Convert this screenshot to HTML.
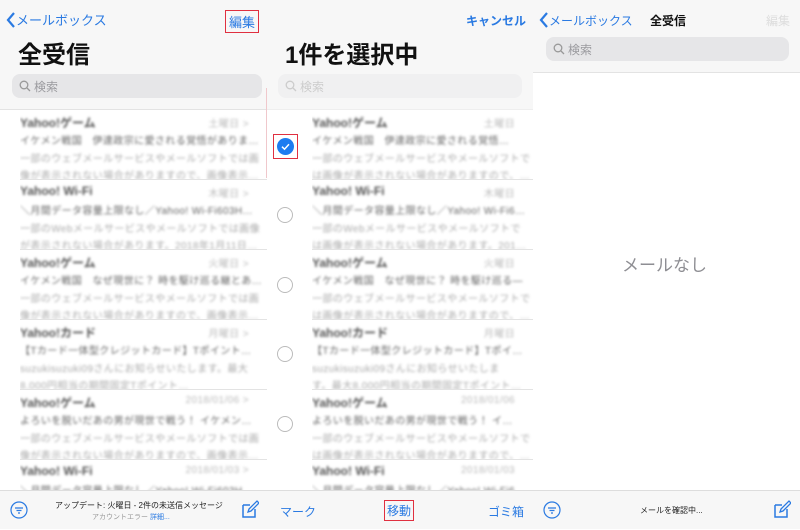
<!DOCTYPE html>
<html><head><meta charset="utf-8"><style>
*{margin:0;padding:0;box-sizing:border-box}
body{width:800px;height:529px;overflow:hidden;background:#fff;font-family:"Liberation Sans","Noto Sans CJK JP",sans-serif;position:relative}
.a{position:absolute;white-space:nowrap}
.hdr{background:#f7f7f7}
.blue{color:#2a7ae2}
.srch{background:#e6e6e8;border-radius:8px;height:24px;font-size:12px;color:#9a9a9e;padding:4px 0 0 22px}
.row{position:absolute;height:70px;border-bottom:1px solid #e3e3e3;overflow:hidden}
.row div{position:absolute;white-space:nowrap;filter:blur(1.2px);font-size:10px;left:0;letter-spacing:0.4px;overflow:hidden;width:100%;padding-right:18px}
.t{top:4px;font-weight:bold;color:#555;font-size:12px!important;letter-spacing:0!important}
.l2{top:22px;color:#666}
.l3{top:40px;color:#aaa}
.l4{top:57px;color:#aaa}
.d{right:18px;left:auto!important;width:auto!important;padding:0!important;top:5px;color:#bbb;font-size:10px!important;text-align:right}
.circ{position:absolute;width:16px;height:16px;border:1px solid #bbb;border-radius:50%}
.bar{position:absolute;top:490px;height:39px;background:#f7f7f7;border-top:1px solid #ddd}
</style></head><body>
<!-- panel 1 -->
<div class="a hdr" style="left:0;top:0;width:267px;height:110px"></div>
<div class="a blue" style="left:6px;top:10px;font-size:13px"><svg width="10" height="16" viewBox="0 0 10 16" style="vertical-align:-3px"><path d="M8 1L2 8l6 7" stroke="#2a7ae2" stroke-width="2.2" fill="none"/></svg>メールボックス</div>
<div class="a blue" style="left:225px;top:10px;font-size:13px;border:1px solid #e03040;padding:1px 3px">編集</div>
<div class="a" style="left:18px;top:35px;font-size:24px;font-weight:bold;color:#111">全受信</div>
<div class="a srch" style="left:12px;top:74px;width:250px"><svg width="12" height="12" style="position:absolute;left:7px;top:6px"><circle cx="5" cy="5" r="3.8" stroke="#999" stroke-width="1.3" fill="none"/><path d="M8 8l3 3" stroke="#999" stroke-width="1.3"/></svg>検索</div>
<div class="a" style="left:0;top:109px;width:267px;border-top:1px solid #e3e3e3"></div>
<div class="a" style="left:266px;top:88px;height:90px;border-left:1px solid #f0c8cc"></div>
<div class="row" style="left:20px;top:110px;width:247px"><div class="t">Yahoo!ゲーム</div><div class="d">土曜日 &gt;</div><div class="l2">イケメン戦国　伊達政宗に愛される覚悟がありま…</div><div class="l3">一部のウェブメールサービスやメールソフトでは画</div><div class="l4">像が表示されない場合がありますので、画像表示…</div></div>
<div class="row" style="left:20px;top:180px;width:247px"><div class="t">Yahoo! Wi-Fi</div><div class="d">木曜日 &gt;</div><div class="l2">＼月間データ容量上限なし／Yahoo! Wi-Fi603H…</div><div class="l3">一部のWebメールサービスやメールソフトでは画像</div><div class="l4">が表示されない場合があります。2018年1月11日…</div></div>
<div class="row" style="left:20px;top:250px;width:247px"><div class="t">Yahoo!ゲーム</div><div class="d">火曜日 &gt;</div><div class="l2">イケメン戦国　なぜ現世に？ 時を駆け巡る継とあ…</div><div class="l3">一部のウェブメールサービスやメールソフトでは画</div><div class="l4">像が表示されない場合がありますので、画像表示…</div></div>
<div class="row" style="left:20px;top:320px;width:247px"><div class="t">Yahoo!カード</div><div class="d">月曜日 &gt;</div><div class="l2">【Tカード一体型クレジットカード】Tポイント…</div><div class="l3">suzukisuzuki09さんにお知らせいたします。最大</div><div class="l4">8,000円相当の期間固定Tポイント…</div></div>
<div class="row" style="left:20px;top:390px;width:247px"><div class="t">Yahoo!ゲーム</div><div class="d">2018/01/06 &gt;</div><div class="l2">よろいを脱いだあの男が現世で戦う！ イケメン…</div><div class="l3">一部のウェブメールサービスやメールソフトでは画</div><div class="l4">像が表示されない場合がありますので、画像表示…</div></div>
<div class="row" style="left:20px;top:460px;width:247px;border:none"><div class="t">Yahoo! Wi-Fi</div><div class="d">2018/01/03 &gt;</div><div class="l2">＼月間データ容量上限なし／Yahoo! Wi-Fi603H…</div></div>
<div class="bar" style="left:0;width:267px"></div>
<svg class="a" style="left:10px;top:501px" width="18" height="18"><circle cx="9" cy="9" r="8" stroke="#2a7ae2" stroke-width="1.2" fill="none"/><path d="M5 7h8M6.5 9.5h5M8 12h2" stroke="#2a7ae2" stroke-width="1.2"/></svg>
<div class="a" style="left:55px;top:500px;font-size:8px;color:#222">アップデート: 火曜日 - 2件の未送信メッセージ</div>
<div class="a" style="left:92px;top:512px;font-size:7px;color:#999">アカウントエラー <span class="blue">詳細...</span></div>
<svg class="a" style="left:241px;top:500px" width="18" height="18"><path d="M2 5h7M2 5v12h12v-8" stroke="#2a7ae2" stroke-width="1.5" fill="none"/><path d="M7 12l1-3 8-8 2 2-8 8z" stroke="#2a7ae2" stroke-width="1.3" fill="none"/></svg>
<!-- panel 2 -->
<div class="a hdr" style="left:267px;top:0;width:266px;height:110px"></div>
<div class="a blue" style="left:466px;top:12px;font-size:12px;font-weight:bold">キャンセル</div>
<div class="a" style="left:285px;top:35px;font-size:24px;font-weight:bold;color:#111">1件を選択中</div>
<div class="a srch" style="left:278px;top:74px;width:244px;background:#f0f0f1;color:#ccc"><svg width="12" height="12" style="position:absolute;left:7px;top:6px"><circle cx="5" cy="5" r="3.8" stroke="#ccc" stroke-width="1.3" fill="none"/><path d="M8 8l3 3" stroke="#ccc" stroke-width="1.3"/></svg>検索</div>
<div class="a" style="left:267px;top:109px;width:266px;border-top:1px solid #eee"></div>
<div class="a" style="left:273px;top:134px;width:25px;height:25px;border:1px solid #e03040"></div>
<svg class="a" style="left:277px;top:138px" width="17" height="17"><circle cx="8.5" cy="8.5" r="8.5" fill="#1e7cf0"/><path d="M5 8.7l2.5 2.5 4.5-5" stroke="#fff" stroke-width="1.5" fill="none"/></svg>
<div class="circ" style="left:277px;top:207px"></div>
<div class="circ" style="left:277px;top:277px"></div>
<div class="circ" style="left:277px;top:346px"></div>
<div class="circ" style="left:277px;top:416px"></div>
<div class="row" style="left:312px;top:110px;width:221px"><div class="t">Yahoo!ゲーム</div><div class="d">土曜日</div><div class="l2">イケメン戦国　伊達政宗に愛される覚悟…</div><div class="l3">一部のウェブメールサービスやメールソフトで</div><div class="l4">は画像が表示されない場合がありますので、…</div></div>
<div class="row" style="left:312px;top:180px;width:221px"><div class="t">Yahoo! Wi-Fi</div><div class="d">木曜日</div><div class="l2">＼月間データ容量上限なし／Yahoo! Wi-Fi6…</div><div class="l3">一部のWebメールサービスやメールソフトで</div><div class="l4">は画像が表示されない場合があります。201…</div></div>
<div class="row" style="left:312px;top:250px;width:221px"><div class="t">Yahoo!ゲーム</div><div class="d">火曜日</div><div class="l2">イケメン戦国　なぜ現世に？ 時を駆け巡る—</div><div class="l3">一部のウェブメールサービスやメールソフトで</div><div class="l4">は画像が表示されない場合がありますので、…</div></div>
<div class="row" style="left:312px;top:320px;width:221px"><div class="t">Yahoo!カード</div><div class="d">月曜日</div><div class="l2">【Tカード一体型クレジットカード】Tポイ…</div><div class="l3">suzukisuzuki09さんにお知らせいたしま</div><div class="l4">す。最大8,000円相当の期間固定Tポイント…</div></div>
<div class="row" style="left:312px;top:390px;width:221px"><div class="t">Yahoo!ゲーム</div><div class="d">2018/01/06</div><div class="l2">よろいを脱いだあの男が現世で戦う！ イ…</div><div class="l3">一部のウェブメールサービスやメールソフトで</div><div class="l4">は画像が表示されない場合がありますので、…</div></div>
<div class="row" style="left:312px;top:460px;width:221px;border:none"><div class="t">Yahoo! Wi-Fi</div><div class="d">2018/01/03</div><div class="l2">＼月間データ容量上限なし／Yahoo! Wi-Fi6…</div></div>
<div class="bar" style="left:267px;width:266px"></div>
<div class="a blue" style="left:280px;top:503px;font-size:12px">マーク</div>
<div class="a blue" style="left:384px;top:500px;font-size:12px;border:1px solid #e03040;padding:1px 2px">移動</div>
<div class="a blue" style="left:488px;top:503px;font-size:12px">ゴミ箱</div>
<!-- panel 3 -->
<div class="a hdr" style="left:533px;top:0;width:267px;height:73px;border-bottom:1px solid #e3e3e3"></div>
<div class="a blue" style="left:539px;top:12px;font-size:12px"><svg width="10" height="16" viewBox="0 0 10 16" style="vertical-align:-3px"><path d="M8 1L2 8l6 7" stroke="#2a7ae2" stroke-width="2.2" fill="none"/></svg>メールボックス</div>
<div class="a" style="left:650px;top:12px;font-size:12px;font-weight:bold;color:#111">全受信</div>
<div class="a" style="left:766px;top:12px;font-size:12px;color:#ddd">編集</div>
<div class="a srch" style="left:546px;top:37px;width:243px"><svg width="12" height="12" style="position:absolute;left:7px;top:6px"><circle cx="5" cy="5" r="3.8" stroke="#999" stroke-width="1.3" fill="none"/><path d="M8 8l3 3" stroke="#999" stroke-width="1.3"/></svg>検索</div>
<div class="a" style="left:622px;top:251px;font-size:17px;color:#8e8e93">メールなし</div>
<div class="bar" style="left:533px;width:267px"></div>
<svg class="a" style="left:543px;top:501px" width="18" height="18"><circle cx="9" cy="9" r="8" stroke="#2a7ae2" stroke-width="1.2" fill="none"/><path d="M5 7h8M6.5 9.5h5M8 12h2" stroke="#2a7ae2" stroke-width="1.2"/></svg>
<div class="a" style="left:640px;top:505px;font-size:8px;color:#222">メールを確認中...</div>
<svg class="a" style="left:773px;top:500px" width="18" height="18"><path d="M2 5h7M2 5v12h12v-8" stroke="#2a7ae2" stroke-width="1.5" fill="none"/><path d="M7 12l1-3 8-8 2 2-8 8z" stroke="#2a7ae2" stroke-width="1.3" fill="none"/></svg>
</body></html>
